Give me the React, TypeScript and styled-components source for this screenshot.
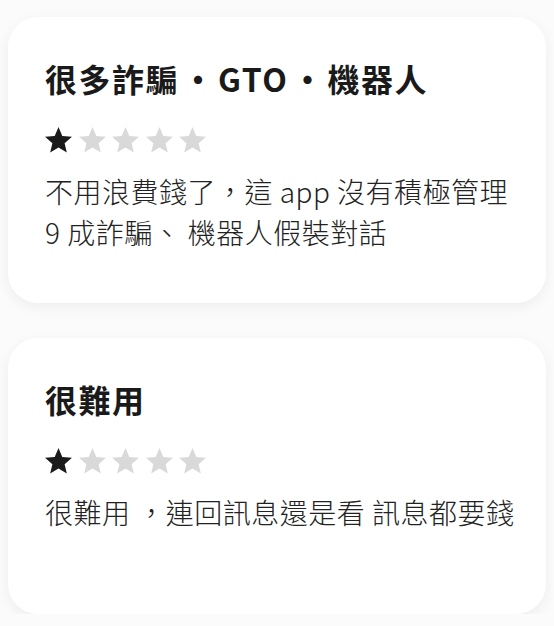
import styled, { createGlobalStyle } from "styled-components";

const GlobalStyle = createGlobalStyle`
  html, body {
    margin: 0;
    padding: 0;
    background: #fbfbfb;
  }
  body {
    font-family: "Noto Sans CJK TC", "Noto Sans", sans-serif;
    color: #1c1c1c;
  }
`;

const reviews = [
  {
    title: ["很多詐騙", "GTO", "機器人"],
    rating: 1,
    lines: ["不用浪費錢了，這 app 沒有積極管理", "9 成詐騙、 機器人假裝對話"],
  },
  {
    title: ["很難用"],
    rating: 1,
    lines: ["很難用 ，連回訊息還是看 訊息都要錢"],
  },
];

const Star = ({ filled }: { filled: boolean }) => (
  <svg width="27" height="26" viewBox="2 2 20 19.3">
    <path
      d="M12 17.27L18.18 21l-1.64-7.03L22 9.24l-7.19-.61L12 2 9.19 8.63 2 9.24l5.46 4.73L5.82 21z"
      fill={filled ? "#1b1b1b" : "#d9d9d9"}
    />
  </svg>
);

const App = () => {
  return (
    <Page>
      <GlobalStyle />
      {reviews.map((r, i) => (
        <Card key={i}>
          <Title>
            {r.title.map((part, k) => (
              <span key={k}>
                {k > 0 && <Dot>・</Dot>}
                {part}
              </span>
            ))}
          </Title>
          <Stars>
            {[0, 1, 2, 3, 4].map((n) => (
              <Star key={n} filled={n < r.rating} />
            ))}
          </Stars>
          <Body>
            {r.lines.map((l, j) => (
              <Line key={j}>{l}</Line>
            ))}
          </Body>
        </Card>
      ))}
    </Page>
  );
};

const Page = styled.div`
  display: flex;
  flex-direction: column;
  gap: 35px;
  padding: 17px 8px 0 8px;
`;

const Card = styled.div`
  background: #ffffff;
  border-radius: 30px;
  box-shadow: 0 4px 14px rgba(0, 0, 0, 0.06);
  min-height: 276px;
  box-sizing: border-box;
  padding: 42px 24px 50px 37px;
  display: flex;
  flex-direction: column;
`;

const Title = styled.div`
  font-size: 32px;
  line-height: 38px;
  font-weight: 700;
  letter-spacing: 1.5px;
  color: #1a1a1a;
  white-space: nowrap;
`;

const Dot = styled.span`
  margin: 0 2.5px 0 3px;
`;

const Stars = styled.div`
  display: flex;
  gap: 6.5px;
  margin-top: 30px;
  height: 26px;
`;

const Body = styled.div`
  margin-top: 18px;
  font-size: 28px;
  line-height: 41px;
  font-weight: 300;
  letter-spacing: 0.5px;
  color: #222;
`;

const Line = styled.div`
  white-space: nowrap;
`;

export default App;
